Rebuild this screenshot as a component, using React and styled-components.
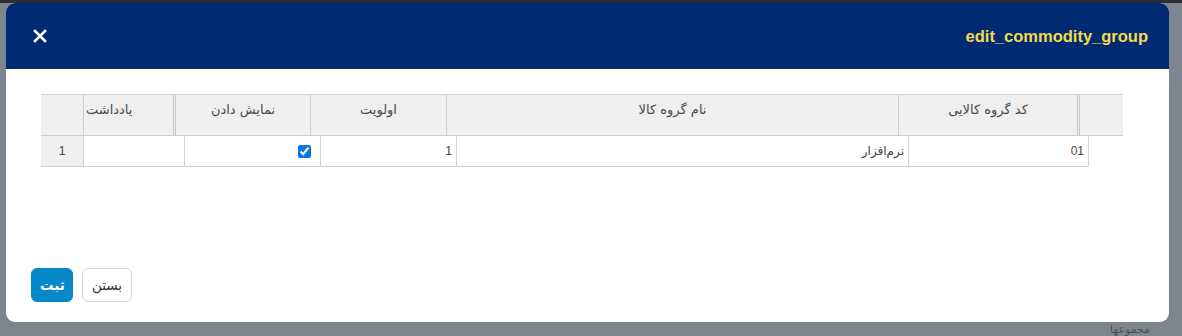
import styled, { createGlobalStyle } from 'styled-components';

const GlobalStyle = createGlobalStyle`
    html, body {
        margin: 0;
        padding: 0;
        background: #7f858f;
        font-family: "Liberation Sans", "DejaVu Sans", sans-serif;
    }
    * { box-sizing: border-box; }
`;

const headCols = [
    { title: '', width: 43 },
    { title: 'یادداشت', width: 92, align: 'flex-end', thick: true },
    { title: 'نمایش دادن', width: 135 },
    { title: 'اولویت', width: 136 },
    { title: 'نام گروه کالا', width: 452 },
    { title: 'کد گروه کالایی', width: 181, thick: true },
    { title: '', width: 43 },
];

const bodyCols = [
    { value: '1', width: 43, num: true },
    { value: '', width: 101 },
    { value: 'check', width: 136, check: true },
    { value: '1', width: 136 },
    { value: 'نرم‌افزار', width: 452 },
    { value: '01', width: 180 },
];

const App = () => {
    return (
        <Backdrop>
            <GlobalStyle />
            <TopStrip />
            <Modal>
                <Header>
                    <CloseBtn aria-label="close">
                        <svg width="14" height="14" viewBox="0 0 14 14">
                            <path d="M2 2 L12 12 M12 2 L2 12" stroke="#fff" strokeWidth="2.6" strokeLinecap="square" />
                        </svg>
                    </CloseBtn>
                    <Title>edit_commodity_group</Title>
                </Header>
                <Body>
                    <Grid>
                        <HeadRow>
                            {headCols.map((c, idx) => (
                                <HeadCell key={idx} $w={c.width} $align={c.align} $thick={c.thick}>
                                    {c.title}
                                </HeadCell>
                            ))}
                        </HeadRow>
                        <DataRow>
                            {bodyCols.map((c, idx) => (
                                <DataCell key={idx} $w={c.width} $num={c.num} $check={c.check}>
                                    {c.check ? <CheckBox type="checkbox" defaultChecked /> : c.value}
                                </DataCell>
                            ))}
                        </DataRow>
                    </Grid>
                </Body>
                <Footer>
                    <SaveBtn>ثبت</SaveBtn>
                    <CloseTextBtn>بستن</CloseTextBtn>
                </Footer>
            </Modal>
            <BehindText>مجموعها</BehindText>
        </Backdrop>
    )
}

export default App

const Backdrop = styled.div`
    position: relative;
    width: 1182px;
    height: 336px;
    overflow: hidden;
    padding: 3px 13px 0 6px;
    background: #7f858f;
`;

const TopStrip = styled.div`
    position: absolute;
    left: 0;
    top: 0;
    width: 100%;
    height: 3px;
    background: #2b2e34;
`;

const Modal = styled.div`
    position: relative;
    z-index: 1;
    width: 1163px;
    height: 319px;
    background: #fff;
    border-radius: 9px;
    overflow: hidden;
    display: flex;
    flex-direction: column;
`;

const Header = styled.div`
    height: 66px;
    background: #002b73;
    display: flex;
    align-items: center;
    justify-content: space-between;
    padding: 0 21px 0 27px;
`;

const CloseBtn = styled.button`
    background: none;
    border: none;
    padding: 0;
    display: flex;
    cursor: pointer;
`;

const Title = styled.div`
    color: #f7d94c;
    font-family: "Liberation Sans", sans-serif;
    font-weight: bold;
    font-size: 16.5px;
`;

const Body = styled.div`
    flex: 1;
    padding: 25px 0 0 35px;
`;

const Grid = styled.div`
    display: flex;
    flex-direction: column;
    width: fit-content;
`;

const HeadRow = styled.div`
    display: flex;
    height: 42px;
    border-top: 1px solid #d4d4d4;
`;

const HeadCell = styled.div`
    width: ${(p) => p.$w}px;
    background: #efefef;
    border-bottom: 1px solid #cfcfcf;
    border-right: ${(p) => (p.$thick ? '3px double #c8c8c8' : '1px solid #cfcfcf')};
    display: flex;
    justify-content: ${(p) => p.$align || 'center'};
    align-items: flex-start;
    padding: 7px 2px 0;
    font-family: "DejaVu Sans", sans-serif;
    font-size: 13px;
    color: #4a4a4a;
    direction: rtl;
    white-space: nowrap;
    overflow: hidden;

    &:last-child { border-right: none; }
`;

const DataRow = styled.div`
    display: flex;
    height: 31px;
`;

const DataCell = styled.div`
    width: ${(p) => p.$w}px;
    background: ${(p) => (p.$num ? '#efefef' : '#fff')};
    border-bottom: 1px solid #d0d0d0;
    border-right: 1px solid #d0d0d0;
    display: flex;
    align-items: center;
    justify-content: ${(p) => (p.$num ? 'center' : 'flex-start')};
    padding: 0 ${(p) => (p.$num ? '0' : p.$check ? '9px' : '4px')} 0 0;
    font-family: "Liberation Sans", "DejaVu Sans", sans-serif;
    font-size: 12px;
    color: #444;
    direction: ${(p) => (p.$num ? 'ltr' : 'rtl')};
`;

const CheckBox = styled.input`
    width: 13px;
    height: 13px;
    margin: 0;
    accent-color: #0b76e0;
`;

const Footer = styled.div`
    display: flex;
    gap: 9px;
    padding: 0 0 20px 25px;
`;

const BaseBtn = styled.button`
    height: 34px;
    border-radius: 6px;
    font-family: "DejaVu Sans", sans-serif;
    font-size: 13.5px;
    padding: 0 8px;
    cursor: pointer;
`;

const SaveBtn = styled(BaseBtn)`
    width: 42px;
    background: #0788c8;
    color: #fff;
    font-weight: bold;
    border: 1px solid #0788c8;
`;

const CloseTextBtn = styled(BaseBtn)`
    width: 50px;
    background: #fff;
    color: #333;
    border: 1px solid #d6d6d6;
`;

const BehindText = styled.div`
    position: absolute;
    right: 32px;
    bottom: 0;
    font-family: "DejaVu Sans", sans-serif;
    font-size: 11px;
    color: #4a4f57;
    direction: rtl;
`;
